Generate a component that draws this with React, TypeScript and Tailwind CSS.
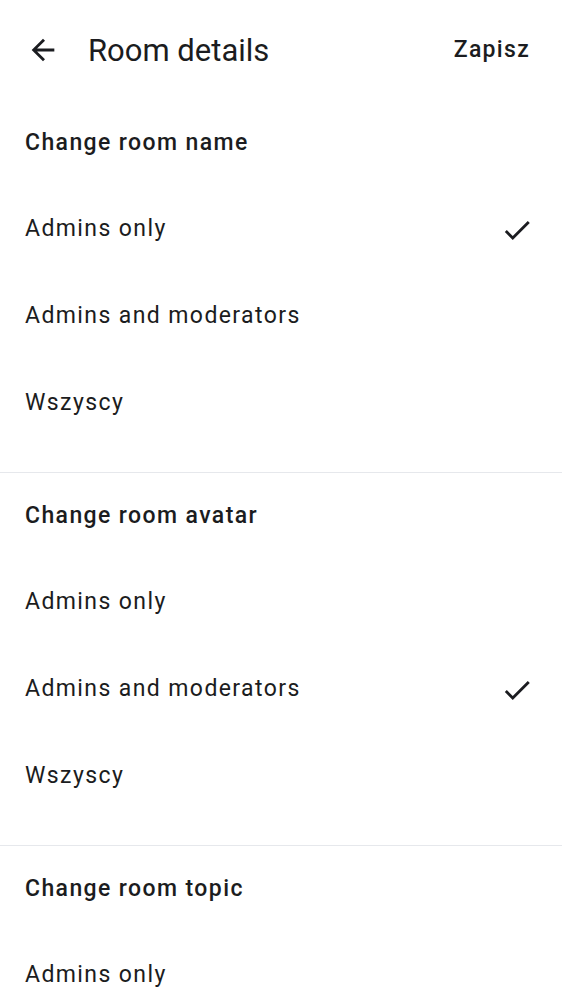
import React from 'react';

type Section = { title: string; options: string[]; selected: number };

const SECTIONS: Section[] = [
  { title: 'Change room name', options: ['Admins only', 'Admins and moderators', 'Wszyscy'], selected: 0 },
  { title: 'Change room avatar', options: ['Admins only', 'Admins and moderators', 'Wszyscy'], selected: 1 },
  { title: 'Change room topic', options: ['Admins only', 'Admins and moderators', 'Wszyscy'], selected: 1 },
];

const CheckIcon = () => (
  <svg width="34" height="34" viewBox="0 0 24 24" fill="#1b1c20">
    <path d="M9 16.17 4.83 12l-1.42 1.41L9 19 21 7l-1.41-1.41z" />
  </svg>
);

const BackIcon = () => (
  <svg width="34" height="34" viewBox="0 0 24 24" fill="#1b1c20">
    <path d="M20 11H7.83l5.59-5.59L12 4l-8 8 8 8 1.41-1.41L7.83 13H20v-2z" />
  </svg>
);

export default function App() {
  return (
    <div className="w-[562px] h-[1000px] overflow-hidden bg-white text-[#1b1c20]" style={{ fontFamily: 'Roboto, "Noto Sans", sans-serif' }}>
      <header className="h-[100px] flex items-center pl-[26px] pr-[32px]">
        <button className="flex items-center justify-center w-[34px] h-[34px]" aria-label="Back">
          <BackIcon />
        </button>
        <h1 className="ml-[28px] text-[31px] leading-none flex-1">Room details</h1>
        <button className="text-[23px] font-medium tracking-[1.3px]">Zapisz</button>
      </header>

      {SECTIONS.map((section, i) => (
        <section key={section.title} className={i < SECTIONS.length - 1 ? 'border-b border-[#e6e8ec] pb-[25px]' : ''}>
          <div className="h-[86px] flex items-center px-[25px] text-[23px] font-medium tracking-[1.4px]">{section.title}</div>
          {section.options.map((opt, j) => (
            <div key={opt} className="h-[87px] flex items-center justify-between pl-[25px] pr-[28px] text-[23px] tracking-[1.4px]">
              <span>{opt}</span>
              {j === section.selected && <CheckIcon />}
            </div>
          ))}
        </section>
      ))}
    </div>
  );
}
